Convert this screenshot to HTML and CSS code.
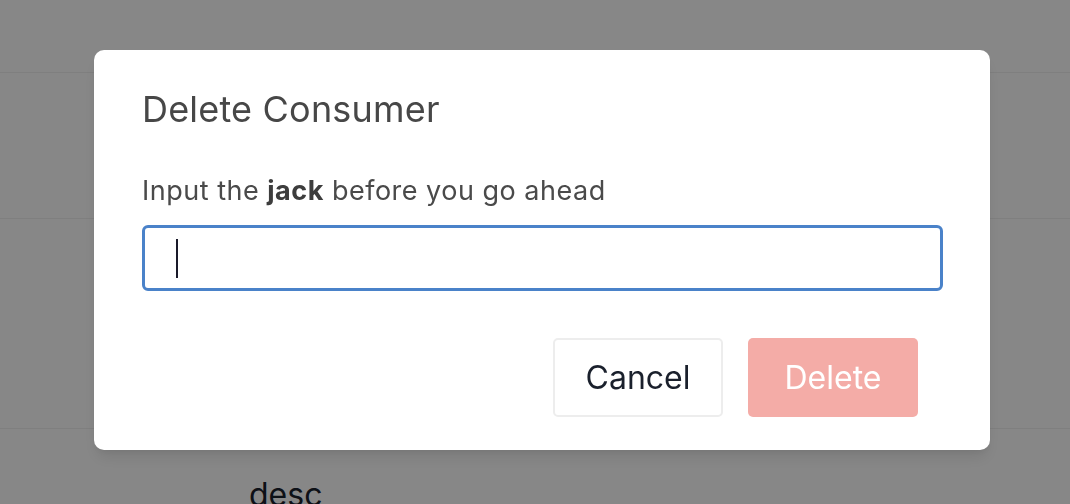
FILE: index.html
```html
<!DOCTYPE html>
<html lang="en">
<head>
  <meta charset="UTF-8" />
  <meta name="viewport" content="width=device-width, initial-scale=1.0" />
  <title>Consumers</title>
  <link rel="stylesheet" href="styles.css">
</head>
<body>
  <div class="page">
    <div class="row row-head"></div>
    <div class="row row-one"></div>
    <div class="row row-two"></div>
    <div class="row row-three"><span class="cell-desc">desc</span></div>
  </div>

  <div class="overlay">
    <div class="modal">
      <h2 class="modal-title">Delete Consumer</h2>
      <p class="modal-text">Input the <b>jack</b> before you go ahead</p>
      <div class="field"><span class="caret"></span></div>
      <div class="modal-footer">
        <button type="button" class="btn btn-cancel">Cancel</button>
        <button type="button" class="btn btn-delete" disabled>Delete</button>
      </div>
    </div>
  </div>
</body>
</html>
```

FILE: styles.css
```css
body {
  font-family: Inter, "Noto Sans", sans-serif;
  background: white;
  margin: 0;
  padding: 0;
  overflow: hidden;
}
.page {
  height: 504px;
}
.row {
  border-bottom: 1px solid #f0f0f0;
}
.row-head {
  height: 72px;
}
.row-one {
  height: 145px;
}
.row-two {
  height: 209px;
}
.row-three {
  padding: 46px 0 0 249px;
}
.cell-desc {
  font-size: 32px;
  color: #1a202c;
}
.overlay {
  position: fixed;
  top: 0;
  left: 0;
  right: 0;
  bottom: 0;
  background: rgba(0, 0, 0, 0.47);
  padding: 50px 0 0 94px;
}
.modal {
  width: 896px;
  box-sizing: border-box;
  background: white;
  border-radius: 10px;
  padding: 38px 47px 33px 48px;
  box-shadow: 0 10px 15px -3px rgba(0, 0, 0, 0.1), 0 4px 6px -2px rgba(0, 0, 0, 0.05);
}
.modal-title {
  margin: 0;
  font-size: 36px;
  font-weight: normal;
  line-height: 43px;
  letter-spacing: 0.2px;
  color: #474747;
}
.modal-text {
  margin: 40px 0 0;
  font-size: 27px;
  line-height: 39px;
  letter-spacing: 0.5px;
  color: #4a4a4a;
}
.modal-text b {
  color: #3d3d3d;
}
.field {
  margin-top: 15px;
  height: 66px;
  box-sizing: border-box;
  border: 3px solid #4a82c9;
  border-radius: 6px;
  display: flex;
  align-items: center;
  padding-left: 31px;
}
.caret {
  width: 2px;
  height: 39px;
  background: #1a1a2a;
}
.modal-footer {
  display: flex;
  justify-content: flex-end;
  gap: 25px;
  margin-top: 47px;
  padding-right: 25px;
}
.btn {
  width: 170px;
  height: 79px;
  font-family: Inter, "Noto Sans", sans-serif;
  font-size: 32px;
  border-radius: 5px;
  cursor: pointer;
}
.btn-cancel {
  background: white;
  color: #1a202c;
  border: 2px solid #ededed;
}
.btn-delete {
  background: #f4aca7;
  color: white;
  border: none;
}
```
